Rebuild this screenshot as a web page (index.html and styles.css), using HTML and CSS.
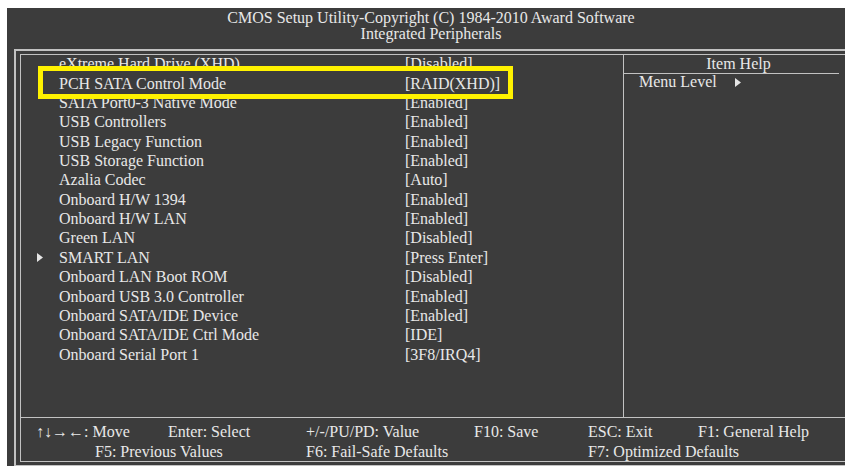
FILE: index.html
```html
<!DOCTYPE html>
<html>
<head>
<meta charset="utf-8">
<link rel="stylesheet" href="styles.css">
</head>
<body>
<div class="screen">
  <div class="title">
    <div>CMOS Setup Utility-Copyright (C) 1984-2010 Award Software</div>
    <div>Integrated Peripherals</div>
  </div>
  <div class="frame-outer">
    <div class="frame-inner">
      <div class="main">
        <div class="list">
          <div class="highlight"></div>
          <div class="row"><span class="mark"></span><span class="item">eXtreme Hard Drive (XHD)</span><span class="val">[Disabled]</span></div>
          <div class="row current"><span class="mark"></span><span class="item">PCH SATA Control Mode</span><span class="val">[RAID(XHD)]</span></div>
          <div class="row"><span class="mark"></span><span class="item">SATA Port0-3 Native Mode</span><span class="val">[Enabled]</span></div>
          <div class="row"><span class="mark"></span><span class="item">USB Controllers</span><span class="val">[Enabled]</span></div>
          <div class="row"><span class="mark"></span><span class="item">USB Legacy Function</span><span class="val">[Enabled]</span></div>
          <div class="row"><span class="mark"></span><span class="item">USB Storage Function</span><span class="val">[Enabled]</span></div>
          <div class="row"><span class="mark"></span><span class="item">Azalia Codec</span><span class="val">[Auto]</span></div>
          <div class="row"><span class="mark"></span><span class="item">Onboard H/W 1394</span><span class="val">[Enabled]</span></div>
          <div class="row"><span class="mark"></span><span class="item">Onboard H/W LAN</span><span class="val">[Enabled]</span></div>
          <div class="row"><span class="mark"></span><span class="item">Green LAN</span><span class="val">[Disabled]</span></div>
          <div class="row"><span class="mark"><svg width="6" height="9" viewBox="0 0 6 9"><polygon points="0,0 6,4.5 0,9" fill="#e6e6e6"/></svg></span><span class="item">SMART LAN</span><span class="val">[Press Enter]</span></div>
          <div class="row"><span class="mark"></span><span class="item">Onboard LAN Boot ROM</span><span class="val">[Disabled]</span></div>
          <div class="row"><span class="mark"></span><span class="item">Onboard USB 3.0 Controller</span><span class="val">[Enabled]</span></div>
          <div class="row"><span class="mark"></span><span class="item">Onboard SATA/IDE Device</span><span class="val">[Enabled]</span></div>
          <div class="row"><span class="mark"></span><span class="item">Onboard SATA/IDE Ctrl Mode</span><span class="val">[IDE]</span></div>
          <div class="row"><span class="mark"></span><span class="item">Onboard Serial Port 1</span><span class="val">[3F8/IRQ4]</span></div>
        </div>
        <div class="help">
          <div class="help-head">Item Help</div>
          <div class="help-body">Menu Level<svg class="lvl" width="6" height="9" viewBox="0 0 6 9"><polygon points="0,0 6,4.5 0,9" fill="#e6e6e6"/></svg></div>
        </div>
      </div>
      <div class="footer">
        <div class="fline">
          <span>↑↓→←: Move</span>
          <span>Enter: Select</span>
          <span>+/-/PU/PD: Value</span>
          <span>F10: Save</span>
          <span>ESC: Exit</span>
          <span>F1: General Help</span>
        </div>
        <div class="fline">
          <span class="span2 f5">F5: Previous Values</span>
          <span>F6: Fail-Safe Defaults</span>
          <span></span>
          <span class="span2">F7: Optimized Defaults</span>
        </div>
      </div>
    </div>
  </div>
</div>
</body>
</html>
```
FILE: styles.css
```css
html, body {
  margin: 0;
  padding: 0;
  background: #ffffff;
  width: 845px;
  height: 466px;
  overflow: hidden;
}
.screen {
  margin: 8px 0 0 7px;
  width: 848px;
  height: 458px;
  background: #3c3c3c;
  padding-top: 2px;
  box-sizing: border-box;
  font-family: "Liberation Serif", "Times New Roman", serif;
  font-size: 16px;
  color: #e8e8e8;
}
.title {
  text-align: center;
  line-height: 16px;
}
.frame-outer {
  margin: 7px 0 0 7px;
  width: 834px;
  border: 2px solid #c2c2c2;
  padding: 3px 4px;
}
.frame-inner {
  border: 1px solid #c2c2c2;
}
.main {
  display: flex;
  height: 362px;
}
.list {
  position: relative;
  width: 602px;
  margin-top: -0.8px;
}
.row {
  display: grid;
  grid-template-columns: 38px 346px 1fr;
  line-height: 19.36px;
  height: 19.36px;
  white-space: nowrap;
}
.mark {
  padding-left: 16px;
  display: flex;
  align-items: center;
}
.mark svg {
  margin-top: 1px;
}
.row.current {
  position: relative;
  z-index: 2;
}
.highlight {
  position: absolute;
  left: 17px;
  top: 11.8px;
  width: 475px;
  height: 32.5px;
  box-sizing: border-box;
  border: 5px solid #fff200;
  background: #3c3c3c;
  z-index: 1;
}
.help {
  border-left: 1px solid #c2c2c2;
  width: 217px;
}
.help-head {
  height: 18px;
  line-height: 18px;
  text-align: center;
  padding-left: 14px;
  border-bottom: 1px solid #c2c2c2;
  margin-right: 2px;
}
.help-body {
  line-height: 16px;
  padding-left: 15px;
  display: flex;
  align-items: center;
}
.help-body .lvl {
  margin-left: 18px;
}
.footer {
  border-top: 1px solid #c2c2c2;
  height: 44px;
  padding: 3.6px 0 0 15px;
  box-sizing: border-box;
}
.fline {
  display: grid;
  grid-template-columns: 132px 138px 168px 114px 110px 1fr;
  line-height: 20px;
  height: 20px;
  white-space: nowrap;
}
.span2 {
  grid-column: span 2;
}
.f5 {
  padding-left: 59px;
}
```
